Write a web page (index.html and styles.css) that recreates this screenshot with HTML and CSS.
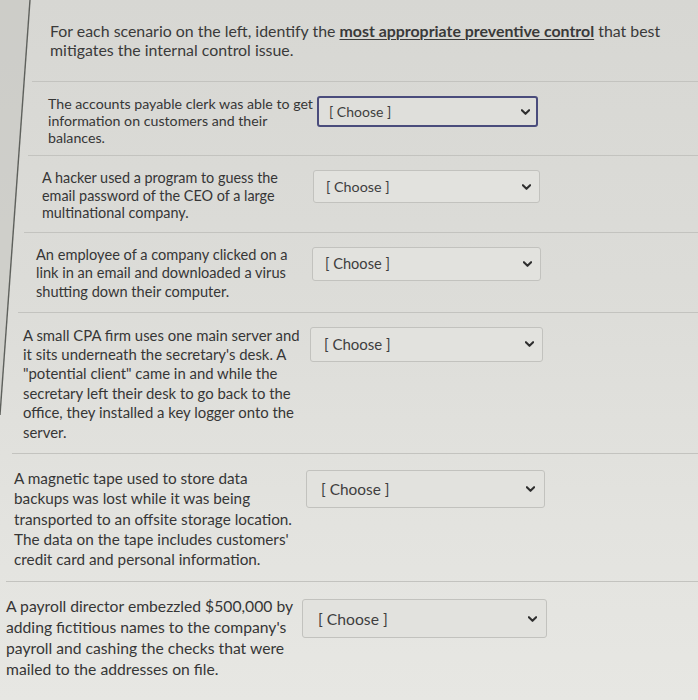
FILE: index.html
```html
<!DOCTYPE html>
<html lang="en">
<head>
<meta charset="utf-8">
<title>Preventive controls matching</title>
<link rel="stylesheet" href="styles.css">
</head>
<body>
<main class="page">
  <p class="intro">For each scenario on the left, identify the <u class="em">most appropriate preventive control</u> that best mitigates the internal control issue.</p>

  <div class="row r1">
    <p class="scenario">The accounts payable clerk was able to get information on customers and their balances.</p>
    <div class="select focused"><span>[ Choose ]</span><svg class="chev" viewBox="0 0 10 6"><polyline points="1,1 5,5 9,1"/></svg></div>
  </div>

  <div class="row r2">
    <p class="scenario">A hacker used a program to guess the email password of the CEO of a large multinational company.</p>
    <div class="select"><span>[ Choose ]</span><svg class="chev" viewBox="0 0 10 6"><polyline points="1,1 5,5 9,1"/></svg></div>
  </div>

  <div class="row r3">
    <p class="scenario">An employee of a company clicked on a link in an email and downloaded a virus shutting down their computer.</p>
    <div class="select"><span>[ Choose ]</span><svg class="chev" viewBox="0 0 10 6"><polyline points="1,1 5,5 9,1"/></svg></div>
  </div>

  <div class="row r4">
    <p class="scenario">A small CPA firm uses one main server and it sits underneath the secretary's desk. A "potential client" came in and while the secretary left their desk to go back to the office, they installed a key logger onto the server.</p>
    <div class="select"><span>[ Choose ]</span><svg class="chev" viewBox="0 0 10 6"><polyline points="1,1 5,5 9,1"/></svg></div>
  </div>

  <div class="row r5">
    <p class="scenario">A magnetic tape used to store data backups was lost while it was being transported to an offsite storage location. The data on the tape includes customers' credit card and personal information.</p>
    <div class="select"><span>[ Choose ]</span><svg class="chev" viewBox="0 0 10 6"><polyline points="1,1 5,5 9,1"/></svg></div>
  </div>

  <div class="row r6">
    <p class="scenario">A payroll director embezzled $500,000 by adding fictitious names to the company's payroll and cashing the checks that were mailed to the addresses on file.</p>
    <div class="select"><span>[ Choose ]</span><svg class="chev" viewBox="0 0 10 6"><polyline points="1,1 5,5 9,1"/></svg></div>
  </div>
</main>
<svg class="frame" width="698" height="700" viewBox="0 0 698 700" aria-hidden="true">
  <polygon points="0,0 30,0 0,415" fill="#c6c6c2" fill-opacity="0.6"/>
  <line x1="30" y1="0" x2="0" y2="415" stroke="#5e605c" stroke-width="1.4"/>
</svg>
</body>
</html>
```

FILE: styles.css
```css
html, body {
  margin: 0;
  padding: 0;
}
body {
  width: 698px;
  height: 700px;
  overflow: hidden;
  position: relative;
  font-family: Lato, "Open Sans", "Liberation Sans", sans-serif;
  color: #363636;
  background: linear-gradient(180deg, #d7d7d3 0%, #dcdcd8 40%, #e3e3df 75%, #e7e7e3 100%);
}
.frame {
  position: absolute;
  left: 0;
  top: 0;
  z-index: 2;
  pointer-events: none;
}
.page {
  position: relative;
  z-index: 1;
  padding-top: 21px;
}
.intro {
  margin: 0 20px 22px 50px;
  font-size: 15.9px;
  line-height: 19px;
  color: #3a3a3a;
}
.intro .em {
  font-weight: 700;
  text-decoration-thickness: 1px;
  text-underline-offset: 2px;
}
.row {
  display: flex;
  align-items: flex-start;
  border-top: 1px solid #c3c3bf;
}
.scenario {
  margin: 0;
  flex: none;
}
.select {
  flex: none;
  box-sizing: border-box;
  display: flex;
  align-items: center;
  justify-content: space-between;
  border: 1px solid #c2c2be;
  border-radius: 3px;
  background: #e2e2de;
  color: #3e3e3e;
}
.select.focused {
  border: 2px solid #4a4c7c;
  background: #dfdfdb;
}
.chev {
  width: 9px;
  height: 6px;
  fill: none;
  stroke: #2e2e2e;
  stroke-width: 2.3;
  stroke-linecap: round;
  stroke-linejoin: round;
}

.r1 { margin-left: 32px; padding: 13px 0 9px 16px; }
.r1 .scenario { width: 268px; font-size: 14.2px; line-height: 17px; }
.r1 .select { margin-top: 1px; margin-left: 1px; width: 221px; height: 31px; padding: 0 6px 0 10px; font-size: 14px; }

.r2 { margin-left: 28px; padding: 13px 0 10px 14px; }
.r2 .scenario { width: 250px; font-size: 14.4px; line-height: 17.6px; }
.r2 .select { margin-top: 1px; margin-left: 21px; width: 227px; height: 33px; padding: 0 8px 0 12px; font-size: 14.3px; }

.r3 { margin-left: 24px; padding: 13px 0 10px 12px; }
.r3 .scenario { width: 260px; font-size: 14.6px; line-height: 18.6px; }
.r3 .select { margin-top: 1px; margin-left: 16px; width: 229px; height: 34px; padding: 0 8px 0 12px; font-size: 14.6px; }

.r4 { margin-left: 18px; padding: 13px 0 11px 5px; }
.r4 .scenario { width: 287px; font-size: 14.9px; line-height: 19.4px; }
.r4 .select { margin-top: 1px; margin-left: 0; width: 233px; height: 35px; padding: 0 8px 0 13px; font-size: 15px; }

.r5 { margin-left: 12px; padding: 14px 0 12px 2px; }
.r5 .scenario { width: 291px; font-size: 15.3px; line-height: 20.3px; }
.r5 .select { margin-top: 2px; margin-left: 1px; width: 239px; height: 38px; padding: 0 9px 0 14px; font-size: 15.4px; }

.r6 { margin-left: 6px; padding: 14px 0 20px 0; }
.r6 .scenario { width: 292px; font-size: 15.7px; line-height: 21px; }
.r6 .select { margin-top: 3px; margin-left: 4px; width: 245px; height: 39px; padding: 0 9px 0 15px; font-size: 15.7px; }
```
